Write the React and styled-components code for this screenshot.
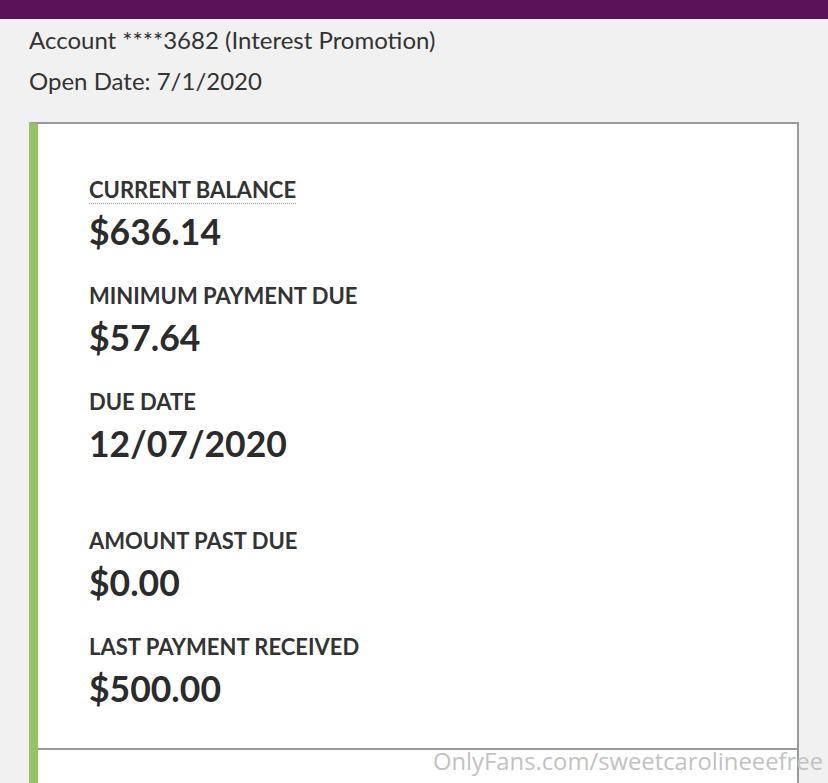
import styled, { createGlobalStyle } from 'styled-components'

const GlobalStyle = createGlobalStyle`
  html, body {
    margin: 0;
    padding: 0;
    background: #f1f1f1;
    font-family: Lato, "Open Sans", sans-serif;
    color: #333;
    overflow: hidden;
  }
`

const Page = styled.div`
  position: relative;
  height: 783px;
  overflow: hidden;
`

const TopBar = styled.div`
  height: 19px;
  background: #5c1259;
`

const Header = styled.div`
  padding: 0 0 0 29px;
`

const HeaderLine = styled.div`
  font-size: 24px;
  line-height: 41px;
  color: #333;
`

const Card = styled.div`
  margin: 21px 0 0 29px;
  width: 759px;
  background: #fff;
  border-left: 9px solid #97c265;
  border-top: 2px solid #999;
  border-right: 2px solid #999;
`

const Summary = styled.div`
  display: flex;
  flex-direction: column;
  gap: 63px;
  padding: 53px 0 38px 51px;
  border-bottom: 2px solid #999;
`

const Group = styled.div`
  display: flex;
  flex-direction: column;
  gap: 30px;
`

const Item = styled.div`
  display: flex;
  flex-direction: column;
  align-items: flex-start;
`

const Label = styled.div`
  font-size: 22px;
  font-weight: 700;
  line-height: 26px;
  color: #333;
  border-bottom: ${p => (p.$dotted ? '1px dotted #999' : 'none')};
`

const Value = styled.div`
  font-size: 35.5px;
  font-weight: 700;
  line-height: 42px;
  color: #2b2b2b;
  margin-top: ${p => (p.$dotted ? 7 : 8)}px;
`

const Lower = styled.div`
  height: 120px;
`

const Watermark = styled.div`
  position: absolute;
  right: 5px;
  bottom: 6px;
  font-family: "Open Sans", sans-serif;
  font-size: 23.8px;
  color: #c2c2c2;
`

const top = [
  { label: 'CURRENT BALANCE', value: '$636.14', dotted: true },
  { label: 'MINIMUM PAYMENT DUE', value: '$57.64' },
  { label: 'DUE DATE', value: '12/07/2020' },
]

const bottom = [
  { label: 'AMOUNT PAST DUE', value: '$0.00' },
  { label: 'LAST PAYMENT RECEIVED', value: '$500.00' },
]

function Figure({ item }) {
  return (
    <Item>
      <Label $dotted={item.dotted}>{item.label}</Label>
      <Value $dotted={item.dotted}>{item.value}</Value>
    </Item>
  )
}

export default function App() {
  return (
    <Page>
      <GlobalStyle />
      <TopBar />
      <Header>
        <HeaderLine>Account ****3682 (Interest Promotion)</HeaderLine>
        <HeaderLine>Open Date: 7/1/2020</HeaderLine>
      </Header>
      <Card>
        <Summary>
          <Group>
            {top.map(item => <Figure key={item.label} item={item} />)}
          </Group>
          <Group>
            {bottom.map(item => <Figure key={item.label} item={item} />)}
          </Group>
        </Summary>
        <Lower />
      </Card>
      <Watermark>OnlyFans.com/sweetcarolineeefree</Watermark>
    </Page>
  )
}
